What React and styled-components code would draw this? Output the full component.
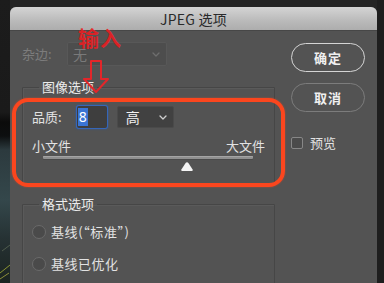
import React from 'react';
import styled, { createGlobalStyle } from 'styled-components';

const Global = createGlobalStyle`
  html, body { margin: 0; padding: 0; background: #1f1f1f; }
  body { font-family: "Noto Sans CJK SC", "Noto Sans", sans-serif; }
  * { box-sizing: border-box; }
`;

const Page = styled.div`
  width: 384px;
  height: 283px;
  overflow: hidden;
  display: flex;
  background: #222;
`;

const Backdrop = styled.div`
  width: 10px;
  flex: none;
  position: relative;
  background: linear-gradient(
    to bottom,
    #1c1c1c 0,
    #1a1a1a 112px,
    #0b0b0b 122px,
    #0d0f10 136px,
    #2c3a3e 150px,
    #34474b 200px,
    #263234 238px,
    #1b2320 283px
  );
`;

const Streaks = styled.svg`
  position: absolute;
  left: 0;
  bottom: 0;
`;

const Frame = styled.div`
  flex: 1;
  display: flex;
  flex-direction: column;
  padding-top: 7px;
  background: #242424;
`;

const RightEdge = styled.div`
  width: 7px;
  flex: none;
  background: #1e1e1e;
`;

const Dialog = styled.div`
  position: relative;
  flex: 1;
  background: #535353;
  border-radius: 6px 6px 0 0;
  overflow: hidden;
  display: flex;
  flex-direction: column;
`;

const TitleBar = styled.div`
  height: 24px;
  flex: none;
  display: flex;
  align-items: center;
  justify-content: center;
  background: linear-gradient(to bottom, #d4d4d4, #bababa 60%, #adadad);
  border-bottom: 1px solid #474747;
  color: #2a2a2a;
  font-size: 14px;
  letter-spacing: 0.2px;
`;

const Body = styled.div`
  display: flex;
  padding-top: 11px;
`;

const LeftCol = styled.div`
  width: 253px;
  margin-left: 12px;
  display: flex;
  flex-direction: column;
`;

const RightCol = styled.div`
  width: 74px;
  margin-left: 16px;
  display: flex;
  flex-direction: column;
`;

const MatteRow = styled.div`
  height: 24px;
  display: flex;
  align-items: center;
`;

const Label = styled.span`
  width: ${p => p.$w || 'auto'};
  flex: none;
  font-size: 13px;
  line-height: 16px;
  letter-spacing: ${p => p.$ls || 0}px;
  color: ${p => (p.$disabled ? '#7c7c7c' : '#e2e2e2')};
  white-space: nowrap;
`;

const Dropdown = styled.div`
  width: ${p => p.$w}px;
  height: ${p => p.$h}px;
  display: flex;
  align-items: center;
  justify-content: space-between;
  padding: 0 6px 0 ${p => p.$pl || 5}px;
  background: ${p => (p.$disabled ? '#4d4d4d' : '#414141')};
  border: 1px solid ${p => (p.$disabled ? '#585858' : '#4a4a4a')};
  border-radius: 2px;
  font-size: 14px;
  color: ${p => (p.$disabled ? '#7a7a7a' : '#f2f2f2')};
`;

const Chevron = ({ color }) => (
  <svg width="8" height="5" viewBox="0 0 8 5">
    <path d="M1 1 L4 4 L7 1" fill="none" stroke={color} strokeWidth="1.3" strokeLinecap="round" strokeLinejoin="round" />
  </svg>
);

const Group = styled.fieldset`
  margin: ${p => p.$mt}px 0 0 0;
  padding: 0 9px ${p => p.$pb || 0}px 9px;
  border: 1px solid #464646;
  box-shadow: inset 1px 1px 0 #5a5a5a;
  border-radius: 1px;
  min-width: 0;
`;

const Legend = styled.legend`
  margin-left: 7px;
  padding: 0 3px;
  font-size: 13px;
  line-height: 16px;
  color: #ececec;
`;

const QualityRow = styled.div`
  margin-top: 11px;
  height: 22px;
  display: flex;
  align-items: center;
`;

const NumberBox = styled.div`
  width: 30px;
  height: 22px;
  margin-left: 15px;
  display: flex;
  align-items: center;
  padding-left: 1px;
  background: #3e3e3e;
  border-radius: 2px;
  box-shadow: 0 0 0 1px #3566b8, 0 0 2px 1px #2e5ea8;
`;

const Selection = styled.span`
  display: inline-block;
  height: 18px;
  padding: 0 1px;
  background: #3a74d4;
  color: #fff;
  font-family: "Noto Sans", sans-serif;
  font-size: 14px;
  line-height: 18px;
`;

const SelectGap = styled.div`
  margin-left: 10px;
`;

const SliderLabels = styled.div`
  margin-top: 10px;
  display: flex;
  justify-content: space-between;
`;

const SliderArea = styled.div`
  position: relative;
  margin: 2px 12px 0 11px;
  height: 18px;
`;

const Track = styled.div`
  height: 3px;
  border-radius: 1px;
  background: #8f8f8f;
  box-shadow: inset 0 1px 0 #a4a4a4, 0 1px 0 #4a4a4a;
`;

const Thumb = styled.svg`
  position: absolute;
  top: 5px;
  margin-left: -7px;
`;

const RadioRow = styled.div`
  margin-top: ${p => p.$mt}px;
  height: 16px;
  display: flex;
  align-items: center;
  gap: 5px;
`;

const Radio = styled.span`
  width: 14px;
  height: 14px;
  border-radius: 50%;
  background: #4a4a4a;
  border: 1px solid #6a6a6a;
  flex: none;
`;

const Button = styled.div`
  height: 29px;
  margin-top: ${p => p.$mt}px;
  display: flex;
  align-items: center;
  justify-content: center;
  border-radius: 15px;
  border: ${p => (p.$primary ? '1.5px solid #d4d4d4' : '1px solid #7c7c7c')};
  color: #f0f0f0;
  font-size: 13px;
  font-weight: 700;
  letter-spacing: 1px;
`;

const CheckRow = styled.div`
  margin-top: 23px;
  height: 16px;
  display: flex;
  align-items: center;
  gap: 7px;
`;

const Checkbox = styled.span`
  width: 12px;
  height: 12px;
  border: 1px solid #878787;
  border-radius: 2px;
  background: #4b4b4b;
`;

const RedRing = styled.div`
  position: absolute;
  left: 2px;
  top: 91px;
  width: 273px;
  height: 89px;
  border: 4px solid #fb461e;
  border-radius: 16px;
  box-shadow: 0 0 2px rgba(255, 70, 30, 0.6);
  pointer-events: none;
`;

const Note = styled.div`
  position: absolute;
  left: 68px;
  top: 19px;
  font-size: 21px;
  line-height: 22px;
  font-weight: 700;
  color: rgba(232, 30, 34, 0.92);
  letter-spacing: 1px;
`;

const NoteArrow = styled.svg`
  position: absolute;
  left: 72px;
  top: 53px;
`;

export default function App() {
  const quality = 8;
  const thumbPct = (quality / 12) * 100 + 2;
  return (
    <>
      <Global />
      <Page>
        <Backdrop>
          <Streaks width="10" height="40" viewBox="0 0 10 40">
            <path d="M0 30 L10 22" stroke="#b9c43a" strokeWidth="1" opacity="0.7" />
            <path d="M0 36 L9 30" stroke="#d6d44a" strokeWidth="1" opacity="0.6" />
            <path d="M2 8 L10 2" stroke="#6d7a62" strokeWidth="1" opacity="0.6" />
          </Streaks>
        </Backdrop>
        <Frame>
          <Dialog>
            <TitleBar>JPEG 选项</TitleBar>
            <Body>
              <LeftCol>
                <MatteRow>
                  <Label $w="45px" $disabled>杂边:</Label>
                  <Dropdown $w={100} $h={24} $disabled>
                    <span>无</span>
                    <Chevron color="#6e6e6e" />
                  </Dropdown>
                </MatteRow>
                <Group $mt={13} $pb={10}>
                  <Legend>图像选项</Legend>
                  <QualityRow>
                    <Label>品质:</Label>
                    <NumberBox>
                      <Selection>8</Selection>
                    </NumberBox>
                    <SelectGap>
                      <Dropdown $w={57} $h={22} $pl={8}>
                        <span>高</span>
                        <Chevron color="#cfcfcf" />
                      </Dropdown>
                    </SelectGap>
                  </QualityRow>
                  <SliderLabels>
                    <Label>小文件</Label>
                    <Label>大文件</Label>
                  </SliderLabels>
                  <SliderArea>
                    <Track />
                    <Thumb width="14" height="11" viewBox="0 0 14 11" style={{ left: `${thumbPct}%` }}>
                      <path d="M7 1.2 Q7.8 1.2 8.4 2 L12.6 8.6 Q13.4 10 11.8 10 L2.2 10 Q0.6 10 1.4 8.6 L5.6 2 Q6.2 1.2 7 1.2 Z" fill="#f4f4f4" />
                    </Thumb>
                  </SliderArea>
                </Group>
                <Group $mt={11} $pb={40}>
                  <Legend>格式选项</Legend>
                  <RadioRow $mt={12}>
                    <Radio />
                    <Label $ls={0.6}>基线(“标准”)</Label>
                  </RadioRow>
                  <RadioRow $mt={16}>
                    <Radio />
                    <Label $ls={0.5}>基线已优化</Label>
                  </RadioRow>
                </Group>
              </LeftCol>
              <RightCol>
                <Button $mt={1} $primary>确定</Button>
                <Button $mt={11}>取消</Button>
                <CheckRow>
                  <Checkbox />
                  <Label>预览</Label>
                </CheckRow>
              </RightCol>
            </Body>
            <RedRing />
            <Note>输入</Note>
            <NoteArrow width="28" height="33" viewBox="0 0 28 33">
              <path d="M9 1 L19 1 L19 19 L26 19 L14 32 L2 19 L9 19 Z" fill="none" stroke="#e3262a" strokeWidth="2" strokeLinejoin="round" />
            </NoteArrow>
          </Dialog>
        </Frame>
        <RightEdge />
      </Page>
    </>
  );
}
